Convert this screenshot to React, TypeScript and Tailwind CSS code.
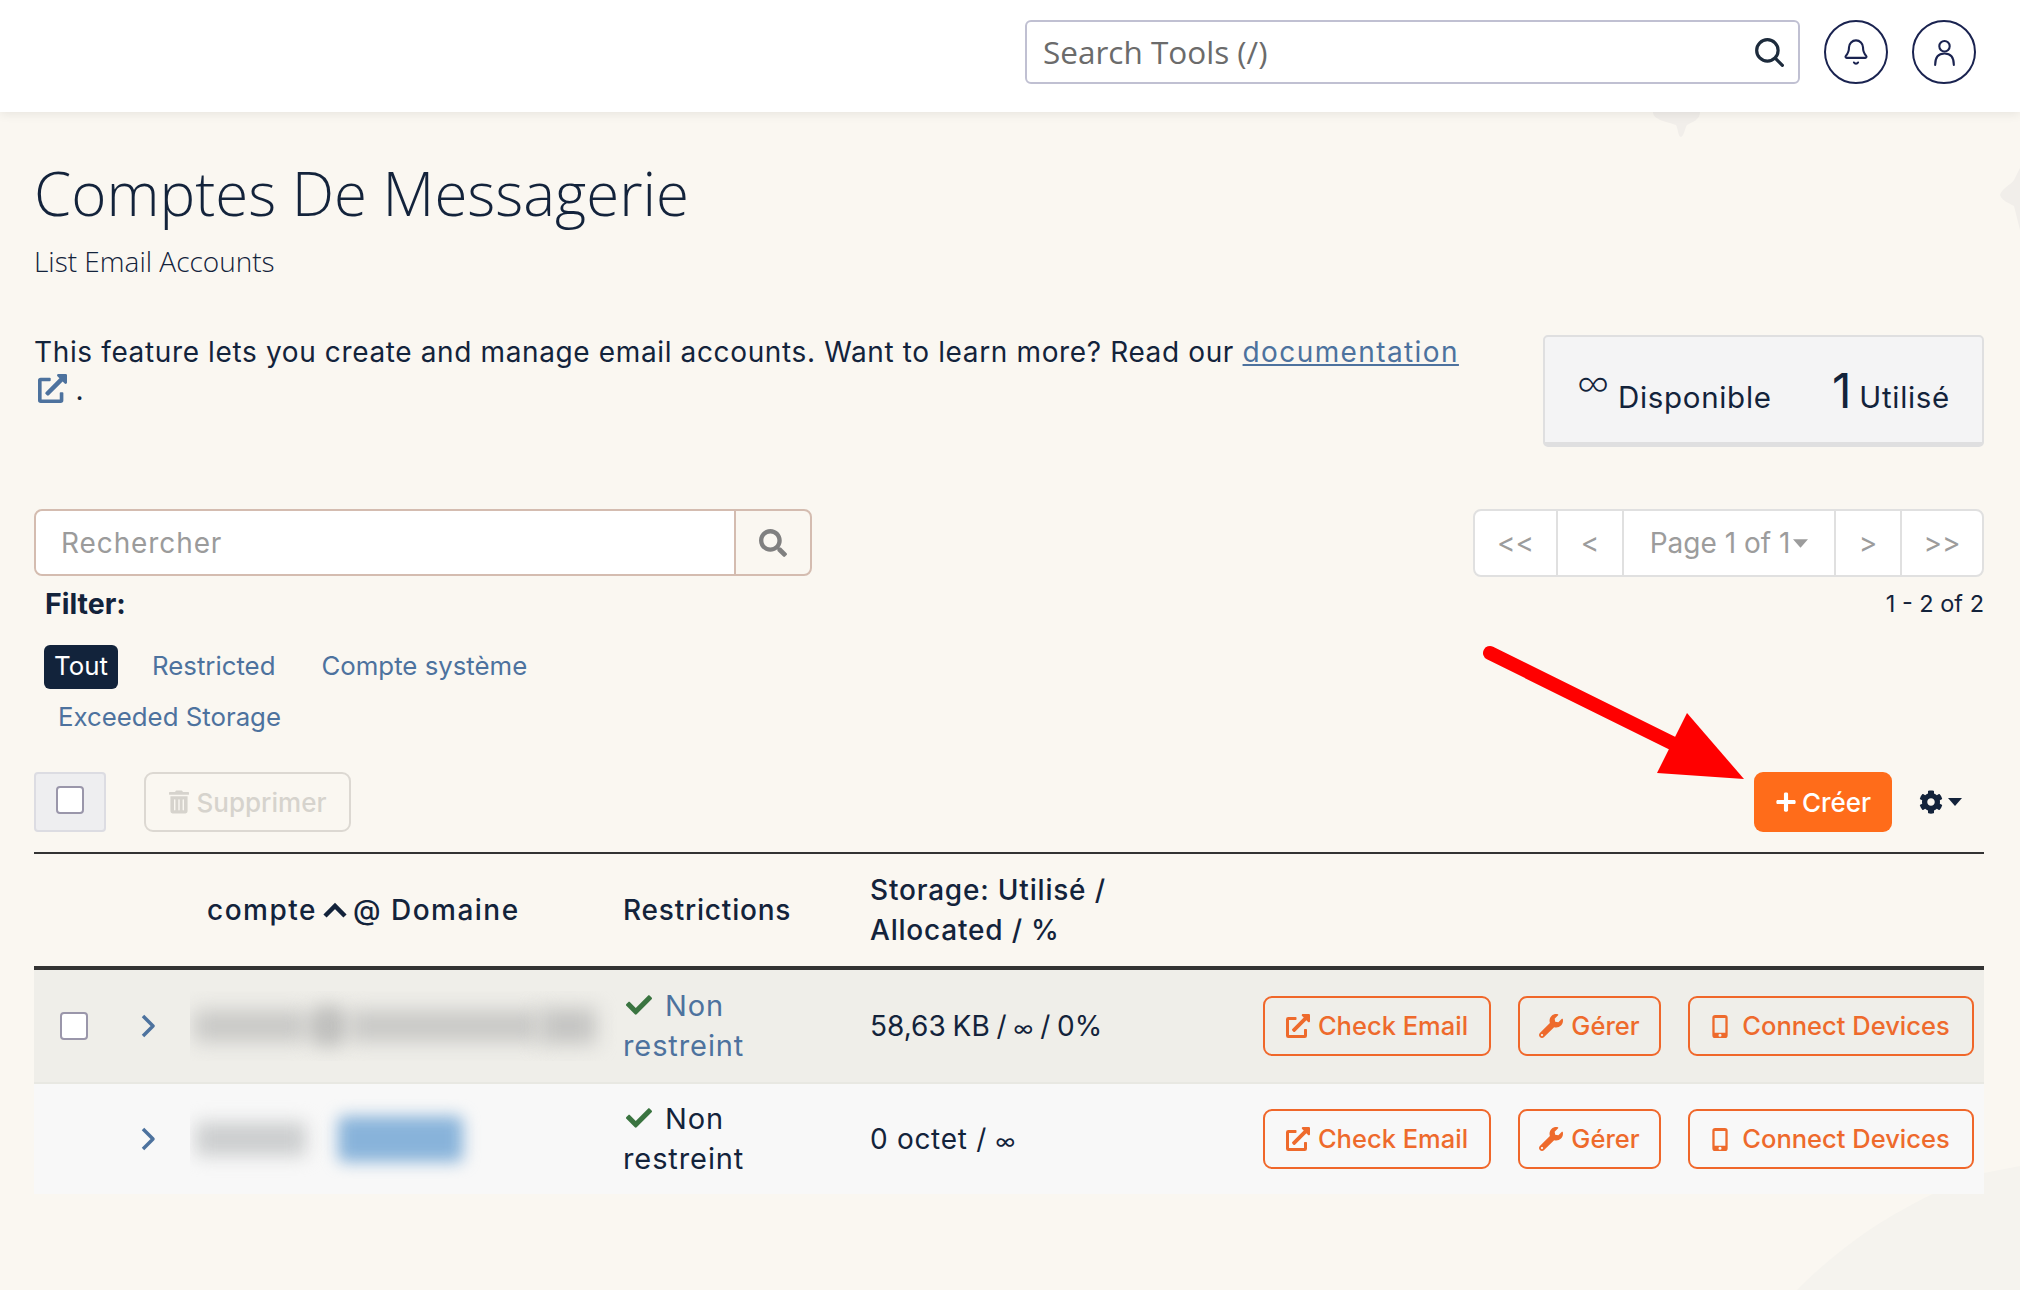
import { Bell } from 'lucide-react';
import { FaCheck, FaCog, FaExternalLinkAlt, FaPlus, FaSearch, FaTrashAlt, FaWrench } from 'react-icons/fa';

const sans = "font-['Inter','Liberation_Sans',sans-serif]";
const open = "font-['Open_Sans','Liberation_Sans',sans-serif]";

function Caret({ className }: { className?: string }) {
  return (
    <svg viewBox="0 0 14 8" className={className} fill="currentColor">
      <path d="M0 0h14L7 8z" />
    </svg>
  );
}

function MobileIcon() {
  return (
    <svg viewBox="0 0 16 24" className="h-[23px] w-[16px]" fill="currentColor">
      <path fillRule="evenodd" d="M3 0h10a3 3 0 0 1 3 3v18a3 3 0 0 1-3 3H3a3 3 0 0 1-3-3V3a3 3 0 0 1 3-3zm-.6 3v15.5h11.2V3zM8 19.6a1.6 1.6 0 1 0 0 3.2 1.6 1.6 0 0 0 0-3.2z" />
    </svg>
  );
}

function RowChevron() {
  return (
    <svg viewBox="0 0 16 24" className="ml-[6px] h-[24px] w-[16px] text-[#4d729e]" fill="none" stroke="currentColor" strokeWidth="3.5">
      <path d="M3 2l10 10L3 22" strokeLinejoin="round" />
    </svg>
  );
}

function ActionButtons() {
  const btn =
    'flex h-[60px] items-center justify-center gap-[8px] rounded-[9px] border-2 border-[#f0672a] text-[25.5px] font-medium text-[#ee6a2c]';
  return (
    <div className="flex gap-[27px] pr-[10px]">
      <button className={`${btn} w-[228px]`}>
        <FaExternalLinkAlt className="h-[24px] w-[24px]" />
        Check Email
      </button>
      <button className={`${btn} w-[143px]`}>
        <FaWrench className="h-[24px] w-[24px]" />
        Gérer
      </button>
      <button className={`${btn} w-[286px] gap-[14px]`}>
        <MobileIcon />
        Connect Devices
      </button>
    </div>
  );
}

function Restriction({ hovered }: { hovered?: boolean }) {
  return (
    <div className={`text-[29px] leading-[40px] tracking-[0.9px] ${hovered ? 'text-[#4d729e]' : 'text-[#13233b]'}`}>
      <FaCheck className="mr-[10px] inline h-[26px] w-[32px] align-[-2px] text-[#3a7440]" />
      Non
      <br />
      restreint
    </div>
  );
}

const rowCols = 'grid grid-cols-[100px_56px_433px_247px_1fr_auto] items-center';

export default function App() {
  return (
    <div className={`relative min-h-[1290px] overflow-hidden bg-[#faf7f1] text-[#13233b] ${sans}`}>
      {/* decorative shapes of the page background */}
      <svg className="absolute left-0 top-0 h-[1290px] w-[2020px]" viewBox="0 0 2020 1290">
        <path d="M1653 112h47c0 8-8 10-13 13-2 3-3 11-6 12-3 0-3-9-5-12-8-3-23-5-23-13z" fill="#f1eeea" />
        <path d="M2020 168l-6 12c-3 5-12 8-14 15 2 6 9 8 14 11l6 24z" fill="#f1eeea" />
        <path d="M1797 1290c50-50 110-90 187-117l36-7v124z" fill="#f5f3ee" />
      </svg>

      <header className="relative flex h-[112px] items-start justify-end bg-white pr-[44px] pt-[20px] shadow-[0_2px_10px_rgba(0,0,0,0.08)]">
        <div className="flex h-[64px] w-[775px] items-center justify-between rounded-[6px] border-2 border-[#c0c0d2] pl-[16px] pr-[14px]">
          <span className={`text-[31.5px] text-[#6b6b6b] ${open}`}>Search Tools (/)</span>
          <svg viewBox="0 0 28 28" className="h-[30px] w-[30px] text-[#1d2b3c]" fill="none" stroke="currentColor" strokeWidth="3">
            <circle cx="12.5" cy="12.5" r="10" />
            <path d="M20 20l6.5 6.5" strokeLinecap="round" />
          </svg>
        </div>
        <div className="ml-[24px] flex h-[64px] w-[64px] items-center justify-center rounded-full border-2 border-[#1a2350] text-[#1a2350]">
          <Bell className="h-[28px] w-[28px]" strokeWidth={1.8} />
        </div>
        <div className="ml-[24px] flex h-[64px] w-[64px] items-center justify-center rounded-full border-2 border-[#1a2350]">
          <svg viewBox="0 0 24 26" className="h-[27px] w-[25px]" fill="none" stroke="#1a2350" strokeWidth="2">
            <circle cx="12" cy="7" r="5" />
            <path d="M3 25c0-7 3-11 9-11s9 4 9 11" strokeLinecap="round" />
          </svg>
        </div>
      </header>

      <main className="relative pl-[34px] pr-[36px] pt-[43px]">
        <h1 className={`text-[60px] font-light leading-[76px] ${open}`}>Comptes De Messagerie</h1>
        <p className={`mt-[10px] text-[28px] font-light leading-[40px] ${open}`}>List Email Accounts</p>

        <div className="mt-[51px] flex items-start justify-between">
          <p className="w-[1440px] pt-[1px] text-[28px] leading-[38px] tracking-[0.63px]">
            This feature lets you create and manage email accounts. Want to learn more? Read our{' '}
            <a className="tracking-[1.4px] text-[#4d729e] underline">documentation</a>{' '}
            <FaExternalLinkAlt className="ml-[4px] inline h-[29px] w-[29px] align-[-3px] text-[#4d729e]" /> .
          </p>
          <div className="mt-[3px] flex h-[112px] w-[441px] items-center justify-between rounded-[5px] border-2 border-b-[5px] border-[#dfdfe0] bg-[#f4f4f5] px-[32px] pt-[8px] text-[29.5px] tracking-[0.7px]">
            <span className="flex items-baseline gap-[8px]">
              <span className={`relative bottom-[7px] text-[46px] font-light leading-none ${open}`}>∞</span> Disponible
            </span>
            <span className="flex items-baseline gap-[7px]">
              <span className="text-[48px] leading-none">1</span> Utilisé
            </span>
          </div>
        </div>

        <div className="mt-[62px] flex items-start justify-between">
          <div className="flex h-[67px] w-[778px] rounded-[8px] border-2 border-[#d4bcb0]">
            <span className="flex flex-1 items-center rounded-l-[7px] bg-white pl-[25px] text-[28px] tracking-[0.9px] text-[#9b9b9b]">Rechercher</span>
            <span className="flex w-[76px] items-center justify-center border-l-2 border-[#d4bcb0]">
              <FaSearch className="h-[28px] w-[28px] text-[#808080]" />
            </span>
          </div>
          <div className="flex h-[68px] w-[511px] rounded-[8px] border-2 border-[#e0e0e0] bg-white text-[28px] text-[#9c9c9c]">
            <span className="flex w-[83px] items-center justify-center border-r-2 border-[#e0e0e0]">&lt;&lt;</span>
            <span className="flex w-[66px] items-center justify-center border-r-2 border-[#e0e0e0]">&lt;</span>
            <span className="flex w-[212px] items-center justify-center gap-[3px] border-r-2 border-[#e0e0e0]">
              Page 1 of 1
              <Caret className="h-[9px] w-[15px]" />
            </span>
            <span className="flex w-[66px] items-center justify-center border-r-2 border-[#e0e0e0]">&gt;</span>
            <span className="flex flex-1 items-center justify-center">&gt;&gt;</span>
          </div>
        </div>

        <div className="mt-[9px] flex items-center justify-between">
          <span className="pl-[11px] text-[28.5px] font-bold leading-[36px]">Filter:</span>
          <span className="text-[23.5px] leading-[36px]">1 - 2 of 2</span>
        </div>

        <div className="ml-[10px] mt-[23px] w-[560px] text-[25.8px] text-[#4d729e]">
          <div className="flex items-center gap-[35px]">
            <span className="flex h-[44px] w-[74px] items-center justify-center rounded-[6px] bg-[#12233b] pb-[2px] text-white">Tout</span>
            <span className="ml-[-1px] pb-[2px]">Restricted</span>
            <span className="ml-[11px] pb-[2px]">Compte système</span>
          </div>
          <div className="mt-[6px] pl-[14px] leading-[44px]">Exceeded Storage</div>
        </div>

        <div className="mt-[33px] flex items-center justify-between">
          <div className="flex items-center gap-[38px]">
            <div className="flex h-[60px] w-[72px] items-center justify-center rounded-[4px] border-2 border-[#dcdce2] bg-[#eeeef0] pb-[4px]">
              <span className="h-[28px] w-[28px] rounded-[4px] border-2 border-[#9a96aa] bg-white" />
            </div>
            <button className="flex h-[60px] w-[207px] items-center justify-center gap-[8px] rounded-[9px] border-2 border-[#dcd8d2] text-[26px] font-medium text-[#d6d3cd]">
              <FaTrashAlt className="h-[24px] w-[20px]" />
              Supprimer
            </button>
          </div>
          <div className="flex items-center gap-[27px] pr-[21px]">
            <button className="flex h-[60px] w-[138px] items-center justify-center gap-[5px] rounded-[9px] bg-[#ff6c1a] text-[26px] font-medium text-white">
              <FaPlus className="h-[22px] w-[22px]" />
              Créer
            </button>
            <div className="flex items-center gap-[4px]">
              <FaCog className="h-[24px] w-[24px]" />
              <Caret className="h-[8px] w-[16px]" />
            </div>
          </div>
        </div>

        <div className="mt-[20px] border-t-2 border-[#333]">
          <div className={`${rowCols} h-[116px] border-b-4 border-[#333] text-[28px] font-medium tracking-[0.8px]`}>
            <span />
            <span />
            <span className="flex items-center gap-[6px] pl-[17px] tracking-[1.5px]">
              compte
              <svg viewBox="0 0 24 16" className="h-[16px] w-[24px]" fill="none" stroke="currentColor" strokeWidth="4.5">
                <path d="M2 14L12 4l10 10" />
              </svg>
              @ Domaine
            </span>
            <span>Restrictions</span>
            <span className="leading-[40px]">
              Storage: Utilisé /<br />
              Allocated / %
            </span>
            <span />
          </div>

          <div className={`${rowCols} h-[114px] border-b-2 border-[#e8e8e2] bg-[#efeee9]`}>
            <span className="flex pl-[26px]">
              <span className="h-[28px] w-[28px] rounded-[4px] border-2 border-[#9a96aa] bg-white" />
            </span>
            <RowChevron />
            <div className="flex h-[70px] items-center overflow-hidden pl-[4px]">
              <div className="h-[32px] w-[112px] bg-[#c8c8c6] blur-[10px]" />
              <div className="h-[44px] w-[44px] rounded-full bg-[#c0c0be] blur-[9px]" />
              <div className="h-[32px] w-[190px] bg-[#c8c8c6] blur-[10px]" />
              <div className="h-[36px] w-[56px] bg-[#c4c4c2] blur-[10px]" />
            </div>
            <Restriction hovered />
            <span className="text-[28px] [word-spacing:-1px]">
              58,63 KB / <span className="text-[21px]">∞</span> / 0%
            </span>
            <ActionButtons />
          </div>

          <div className={`${rowCols} h-[110px] bg-[#f8f8f8]`}>
            <span />
            <RowChevron />
            <div className="flex h-[80px] items-center gap-[32px] overflow-hidden pl-[6px]">
              <div className="h-[34px] w-[110px] bg-[#cccecf] blur-[9px]" />
              <div className="h-[46px] w-[125px] rounded-[6px] bg-[#88b3da] blur-[8px]" />
            </div>
            <Restriction />
            <span className="text-[28px] tracking-[0.7px]">
              0 octet / <span className="text-[21px]">∞</span>
            </span>
            <ActionButtons />
          </div>
        </div>
      </main>

      {/* red annotation arrow drawn over the screenshot */}
      <svg className="absolute left-[1470px] top-[640px] h-[150px] w-[290px]" viewBox="0 0 290 150">
        <path d="M20 13L212 108" stroke="#ff0000" strokeWidth="14" strokeLinecap="round" />
        <path d="M217 73L274 139 187 133z" fill="#ff0000" />
      </svg>
    </div>
  );
}
